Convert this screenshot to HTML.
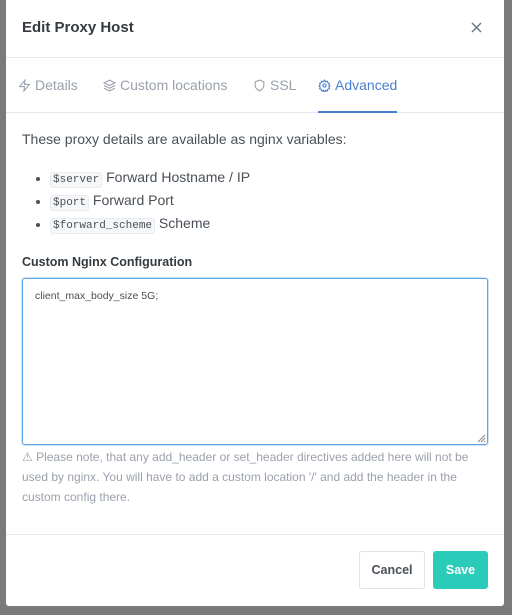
<!DOCTYPE html>
<html><head><meta charset="utf-8"><style>
*{box-sizing:border-box;margin:0;padding:0}
body{width:512px;height:615px;background:#797a7c;font-family:"Liberation Sans",sans-serif;position:relative;overflow:hidden;color:#495057}
.m{position:absolute;left:6px;top:-6px;width:498px;height:612px;background:#fff;border-radius:3px}
.abs{position:absolute}
.t{left:16px;top:25px;font-size:15px;font-weight:bold;color:#343a40}
.hr{left:0;width:498px;height:1px;background:#e6e8ec}
.tab{top:83px;font-size:14px;color:#9aa0ac;display:flex;align-items:center;gap:4px}
.tab svg{width:13px;height:13px}
code{font-family:"Liberation Mono",monospace;font-size:11px;background:#f6f7f9;border:1px solid #e9ecef;border-radius:3px;padding:1px 2px;color:#495057}
.li{left:44px;font-size:14px;color:#495057}
.li:before{content:"";position:absolute;left:-14px;top:8px;width:4px;height:4px;border-radius:50%;background:#495057}
</style></head><body>
<div class="m">
<div class="abs t">Edit Proxy Host</div>
<svg class="abs" style="left:465px;top:28px" width="11" height="11" viewBox="0 0 11 11"><path d="M1 1L10 10M10 1L1 10" stroke="#6e7687" stroke-width="1.5"/></svg>
<div class="abs hr" style="top:63px"></div>
<div class="abs tab" style="left:12px"><svg viewBox="0 0 24 24" fill="none" stroke="#9aa0ac" stroke-width="2"><path d="M13 2L3 14h9l-1 8 10-12h-9z"/></svg>Details</div>
<div class="abs tab" style="left:97px"><svg viewBox="0 0 24 24" fill="none" stroke="#9aa0ac" stroke-width="2"><path d="M12 2L2 7l10 5 10-5zM2 17l10 5 10-5M2 12l10 5 10-5"/></svg>Custom locations</div>
<div class="abs tab" style="left:247px"><svg viewBox="0 0 24 24" fill="none" stroke="#9aa0ac" stroke-width="2"><path d="M12 22s8-4 8-10V5l-8-3-8 3v7c0 6 8 10 8 10z"/></svg>SSL</div>
<div class="abs tab" style="left:312px;color:#467fcf"><svg viewBox="0 0 24 24" fill="none" stroke="#467fcf" stroke-width="2"><circle cx="12" cy="12" r="3"/><path d="M12 2l2 3 3-1 1 3 3 1-1 3 2 2-2 2 1 3-3 1-1 3-3-1-2 3-2-3-3 1-1-3-3-1 1-3-2-2 2-2-1-3 3-1 1-3 3 1z"/></svg>Advanced</div>
<div class="abs hr" style="top:118px"></div>
<div class="abs" style="left:312px;top:117px;width:79px;height:2px;background:#467fcf"></div>
<div class="abs" style="left:16px;top:137px;font-size:14px">These proxy details are available as nginx variables:</div>
<div class="abs li" style="top:175px"><code>$server</code> Forward Hostname / IP</div>
<div class="abs li" style="top:198px"><code>$port</code> Forward Port</div>
<div class="abs li" style="top:221px"><code>$forward_scheme</code> Scheme</div>
<div class="abs" style="left:16px;top:261px;font-size:12.5px;font-weight:bold;color:#343a40">Custom Nginx Configuration</div>
<div class="abs" style="left:16px;top:284px;width:466px;height:167px;border:1px solid #5ea5e8;border-radius:3px;box-shadow:0 0 0 1px #cfe3f8;padding:11px 12px;font-size:10.5px;color:#495057">client_max_body_size 5G;
<svg class="abs" style="right:1px;bottom:1px" width="9" height="9" viewBox="0 0 9 9"><path d="M8 1L1 8M8 4L4 8M8 7L7 8" stroke="#888" stroke-width="1"/></svg></div>
<div class="abs" style="left:16px;top:453px;width:470px;font-size:12px;line-height:20px;color:#9aa0ac">⚠ Please note, that any add_header or set_header directives added here will not be used by nginx. You will have to add a custom location '/' and add the header in the custom config there.</div>
<div class="abs hr" style="top:540px"></div>
<div class="abs" style="left:353px;top:557px;width:66px;height:38px;border:1px solid #dfe2e6;border-radius:3px;font-size:12.5px;font-weight:bold;color:#495057;text-align:center;line-height:36px">Cancel</div>
<div class="abs" style="left:427px;top:557px;width:55px;height:38px;background:#2bcbba;border-radius:3px;font-size:12.5px;font-weight:bold;color:#fff;text-align:center;line-height:38px">Save</div>
</div>
</body></html>
